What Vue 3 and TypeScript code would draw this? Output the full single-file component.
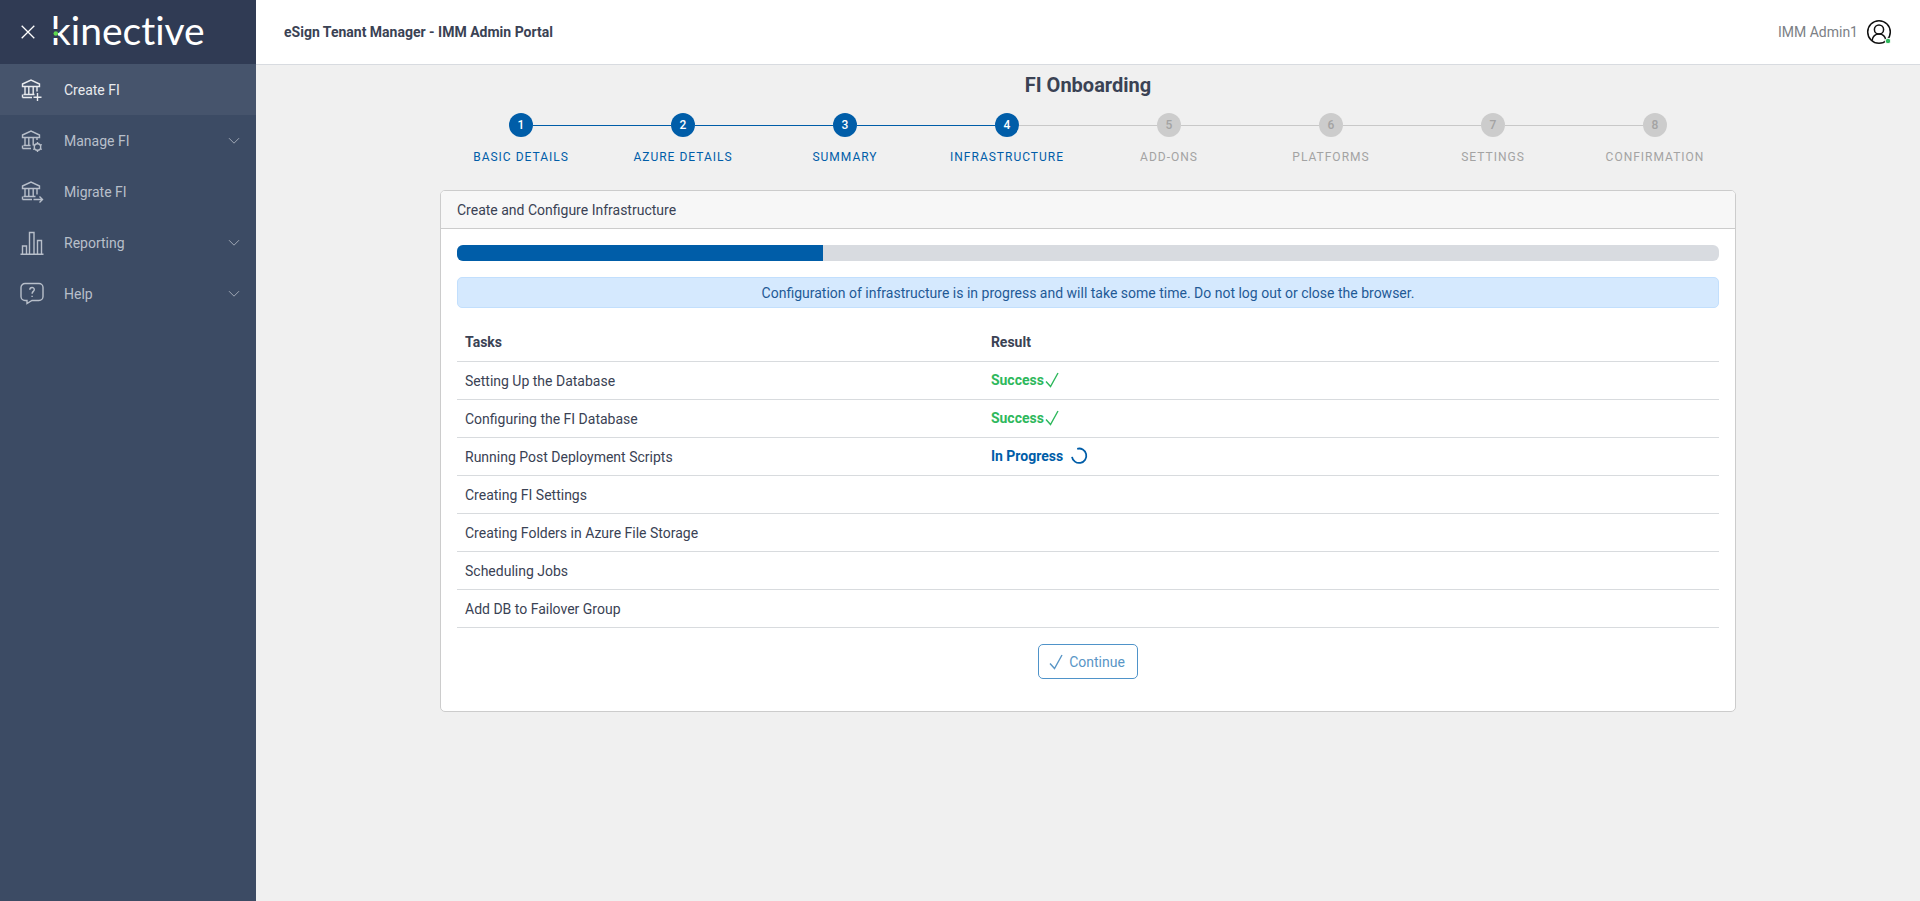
<script setup lang="ts">
interface NavItem { label: string; icon: string; expandable: boolean; active?: boolean }
interface Task { name: string; status: 'success' | 'progress' | 'pending' }

const navItems: NavItem[] = [
  { label: 'Create FI', icon: 'plus', expandable: false, active: true },
  { label: 'Manage FI', icon: 'gear', expandable: true },
  { label: 'Migrate FI', icon: 'arrow', expandable: false },
  { label: 'Reporting', icon: 'chart', expandable: true },
  { label: 'Help', icon: 'help', expandable: true },
]

const steps: string[] = [
  'Basic Details', 'Azure Details', 'Summary', 'Infrastructure',
  'Add-Ons', 'Platforms', 'Settings', 'Confirmation',
]
const currentStep = 4

const progress = 29

const tasks: Task[] = [
  { name: 'Setting Up the Database', status: 'success' },
  { name: 'Configuring the FI Database', status: 'success' },
  { name: 'Running Post Deployment Scripts', status: 'progress' },
  { name: 'Creating FI Settings', status: 'pending' },
  { name: 'Creating Folders in Azure File Storage', status: 'pending' },
  { name: 'Scheduling Jobs', status: 'pending' },
  { name: 'Add DB to Failover Group', status: 'pending' },
]
</script>

<template>
  <div class="shell">
    <aside class="sidebar">
      <div class="brand">
        <button class="close" type="button" aria-label="Close menu">
          <svg width="14" height="14" viewBox="0 0 14 14"><path d="M.7.7l12.600 12.600M13.300.7L.7 13.300" /></svg>
        </button>
        <svg class="logo" width="170" height="56" viewBox="0 0 170 56" role="img" aria-label="kinective">
          <text class="wordmark" x="4" y="41">kinective</text>
          <rect class="gap" x="5" y="25" width="6" height="9" />
          <circle class="dot" cx="8.800" cy="29.500" r="2.300" />
        </svg>
      </div>
      <nav class="nav">
        <a v-for="item in navItems" :key="item.label" href="#" class="nav-link" :class="{ active: item.active }">
          <svg class="nav-icon" width="24" height="24" viewBox="0 0 24 24">
            <g v-if="item.icon === 'plus' || item.icon === 'gear' || item.icon === 'arrow'">
              <path d="M2.500 6L11 2l8.500 4v2.500h-17zM5 8.500v8M8.800 8.500v8M13.200 8.500v8" />
              <path v-if="item.icon === 'plus'" d="M17 8.500v5M3.500 16.500h11M2.500 19.500H12M2.500 16.500v3M17.500 15v8M13.500 19.200h8" />
              <path v-if="item.icon === 'arrow'" d="M17 8.500v6M3.500 16.500h12M2.500 19.500H12M2.500 16.500v3M13.500 19.500h9M19.500 16.500l3 3-3 3" />
              <template v-if="item.icon === 'gear'">
                <path d="M17 8.500v2.500M3.500 16.500h7M2.500 19.500H11M2.500 16.500v3" />
                <circle cx="17.500" cy="18" r="3.200" />
                <path d="M17.500 13v2M17.500 21v2M13.200 15.500l1.700 1M20.100 19.500l1.700 1M21.800 15.500l-1.700 1M14.900 19.500l-1.700 1" />
              </template>
            </g>
            <path v-else-if="item.icon === 'chart'" d="M.5 23.300h23M2.500 23v-8h4v8M9.500 23V1.500H14V23M17.500 23V9.500h4V23" />
            <g v-else>
              <path d="M5 1.500h14a4 4 0 0 1 4 4v9a4 4 0 0 1-4 4h-7l-5 3v-3H5a4 4 0 0 1-4-4v-9a4 4 0 0 1 4-4z" />
              <path d="M9.800 7.800c0-3 4.500-3 4.500-.3 0 2-2.200 1.800-2.200 4.200M12.100 13.700v1.300" />
            </g>
          </svg>
          <span class="nav-label">{{ item.label }}</span>
          <svg v-if="item.expandable" class="chevron" width="12" height="8" viewBox="0 0 12 8"><path d="M1 1.200l5 5 5-5" /></svg>
        </a>
      </nav>
    </aside>

    <div class="content">
      <header class="topbar">
        <strong class="app-name">eSign Tenant Manager - IMM Admin Portal</strong>
        <button class="user" type="button">
          <span>IMM Admin1</span>
          <svg width="26" height="26" viewBox="0 0 26 26">
            <g class="avatar">
              <circle cx="13" cy="13" r="11.300" />
              <circle cx="13" cy="10.500" r="4.600" />
              <path d="M6 21.500c.8-4 3.500-6.400 7-6.400s6.200 2.400 7 6.400" />
            </g>
            <circle class="online" cx="22" cy="22" r="2.800" />
          </svg>
        </button>
      </header>

      <main class="main">
        <h1>FI Onboarding</h1>
        <ol class="stepper">
          <li
            v-for="(step, i) in steps"
            :key="step"
            class="step"
            :class="{ done: i < currentStep }"
          >
            <div class="track">
              <span class="line" :class="{ hidden: i === 0, filled: i < currentStep }"></span>
              <span class="bubble">{{ i + 1 }}</span>
              <span class="line" :class="{ hidden: i === steps.length - 1, filled: i < currentStep - 1 }"></span>
            </div>
            <span class="step-label">{{ step }}</span>
          </li>
        </ol>

        <section class="card">
          <h2>Create and Configure Infrastructure</h2>
          <div class="card-body">
            <div class="progress" role="progressbar" aria-label="Infrastructure progress" :aria-valuenow="progress">
              <div class="bar" :style="{ width: progress + '%' }"></div>
            </div>
            <div class="alert" role="alert">
              Configuration of infrastructure is in progress and will take some time. Do not log out or close the browser.
            </div>
            <table>
              <thead>
                <tr><th class="task-col" scope="col">Tasks</th><th scope="col">Result</th></tr>
              </thead>
              <tbody>
                <tr v-for="task in tasks" :key="task.name">
                  <td>{{ task.name }}</td>
                  <td>
                    <span v-if="task.status === 'success'" class="result success">
                      Success
                      <svg width="16" height="16" viewBox="0 0 16 16"><path d="M2 9.500l4.500 5L14 1" /></svg>
                    </span>
                    <span v-else-if="task.status === 'progress'" class="result running">
                      In Progress
                      <svg width="18" height="18" viewBox="0 0 18 18"><path d="M7.200 1.800A7.200 7.200 0 1 1 2 9.800" /></svg>
                    </span>
                  </td>
                </tr>
              </tbody>
            </table>
            <div class="actions">
              <button class="continue" type="button" disabled>
                <svg width="16" height="16" viewBox="0 0 16 16"><path d="M2 9.500l4.500 5L14 1" /></svg>
                Continue
              </button>
            </div>
          </div>
        </section>
      </main>
    </div>
  </div>
</template>

<style>
body { margin: 0; }
</style>

<style scoped>
.shell {
  display: flex;
  min-height: 100vh;
  background: #f0f0f0;
  color: #3a4254;
  font: 14px/21px Roboto, "Liberation Sans", sans-serif;
}
svg { flex: none; fill: none; stroke: currentColor; }
button { font: inherit; }

.sidebar { flex: none; width: 256px; background: #3c4b64; }
.brand {
  display: flex;
  align-items: center;
  gap: 12px;
  height: 64px;
  padding-left: 21px;
  background: #303b54;
}
.close { display: flex; padding: 0; border: 0; background: none; color: #fff; }
.close svg { stroke-width: 1.3; }
.wordmark { font: 39px Lato, sans-serif; font-variant-ligatures: none; fill: #fff; stroke: none; }
.gap { fill: #303b54; stroke: none; }
.dot { fill: #5fd84f; stroke: none; }

.nav-link {
  display: flex;
  align-items: center;
  height: 51px;
  padding: 0 16px 0 20px;
  color: #b8bfca;
  line-height: 23px;
  text-decoration: none;
}
.nav-link.active { background: #46546c; color: #e9ebee; }
.nav-icon { stroke-width: 1.4; margin-right: 20px; }
.nav-label { flex: 1; padding-top: 1px; }
.chevron { stroke: #a0a8b5; }

.content { flex: 1; min-width: 0; }
.topbar {
  display: flex;
  align-items: center;
  justify-content: space-between;
  height: 64px;
  padding: 0 28px;
  background: #fff;
  border-bottom: 1px solid #d8dbe0;
}
.app-name { font-weight: 700; }
.user {
  display: flex;
  align-items: center;
  gap: 8px;
  padding: 0;
  border: 0;
  background: none;
  color: #7c7f86;
}
.avatar { stroke: #111; stroke-width: 1.5; }
.online { fill: #2eb85c; stroke: #fff; stroke-width: 1; }

.main { max-width: 1296px; margin: 0 auto; }
h1 { margin: 0; padding: 8px 0; font-size: 20px; line-height: 24px; font-weight: 700; text-align: center; }

.stepper { display: flex; margin: 0; padding: 8px 0 23px; list-style: none; }
.step { flex: 1; text-align: center; color: #a3a3a3; }
.track { display: flex; align-items: center; }
.line { flex: 1; height: 1px; background: #c8c8c8; }
.line.filled { background: #005da8; }
.line.hidden { visibility: hidden; }
.bubble {
  width: 24px;
  height: 24px;
  border-radius: 50%;
  background: #ccc;
  font-size: 12px;
  line-height: 24px;
  font-weight: 500;
}
.step-label { display: block; margin-top: 10px; font-size: 12px; line-height: 20px; letter-spacing: 1px; text-transform: uppercase; }
.step.done { color: #005da8; }
.done .bubble { background: #005da8; color: #fff; }

.card { border: 1px solid #ccc; border-radius: 5px; background: #fff; overflow: hidden; }
h2 {
  margin: 0;
  padding: 9px 16px 7px;
  background: #f7f7f7;
  border-bottom: 1px solid #ccc;
  font-size: 14px;
  line-height: 21px;
  font-weight: 400;
}
.card-body { padding: 16px 16px 32px; }
.progress { height: 16px; border-radius: 6px; background: #d8dbe0; overflow: hidden; }
.bar { height: 100%; background: #005da8; }
.alert {
  margin: 16px 0;
  padding: 5px 8px 3px;
  border: 1px solid #c2dffd;
  border-radius: 5px;
  background: #d5e9fe;
  color: #1f5a96;
  text-align: center;
}
table { width: 100%; border-collapse: collapse; table-layout: fixed; }
th, td { box-sizing: border-box; height: 38px; border-bottom: 1px solid #d8dbde; text-align: left; }
th { height: 37px; padding: 8px 8px 7px; font-weight: 700; }
td { padding: 9px 8px 7px; }
td:last-child { padding: 8px; }
.task-col { width: 41.67%; }
.result { display: flex; align-items: center; height: 20px; font-weight: 700; }
.success { color: #2eb85c; }
.result.success svg, .continue svg { stroke-width: 1.4; }
.running { gap: 7px; color: #005da8; }
.running svg { stroke-width: 1.8; }

.actions { display: flex; justify-content: center; padding: 16px 0 0; }
.continue {
  display: flex;
  align-items: center;
  gap: 5px;
  padding: 7px 12px 5px 9px;
  border: 1px solid #4f93c9;
  border-radius: 5px;
  background: #fff;
  color: #5996c6;
}
</style>
